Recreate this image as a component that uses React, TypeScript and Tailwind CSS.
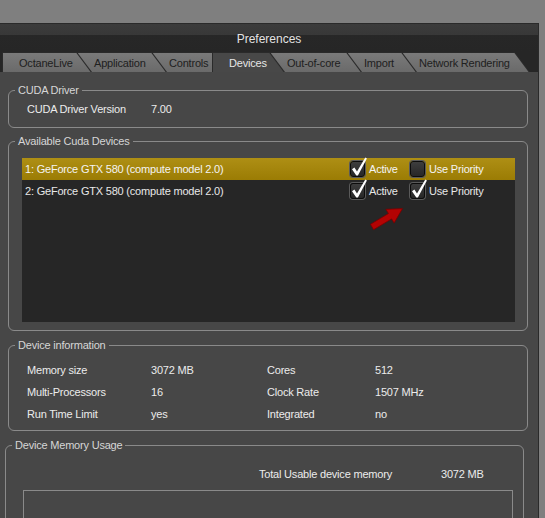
import React from "react";

type TabDef = { label: string; cls: string; active?: boolean };

const tabs: TabDef[] = [
  { label: "OctaneLive", cls: "w-[90px] z-[7]" },
  { label: "Application", cls: "w-[90px] ml-[-15px] z-[6]" },
  { label: "Controls", cls: "w-[76px] ml-[-15px] z-[5]" },
  { label: "Devices", cls: "w-[73px] ml-[-16px] z-[9]", active: true },
  { label: "Out-of-core", cls: "w-[92px] ml-[-15px] z-[4]" },
  { label: "Import", cls: "w-[70px] ml-[-15px] z-[3]" },
  { label: "Network Rendering", cls: "w-[128px] ml-[-15px] z-[2]" },
];

function Tab({ label, cls, active }: TabDef) {
  return (
    <div className={`relative h-[20px] shrink-0 ${cls}`}>
      <div className="absolute inset-0 bg-[#2a2a2a] [clip-path:polygon(0_0,calc(100%_-_15px)_0,100%_100%,0_100%)]" />
      <div
        className={`absolute inset-0 [clip-path:polygon(1px_1px,calc(100%_-_15.6px)_1px,calc(100%_-_1.4px)_100%,1px_100%)] ${
          active ? "bg-[#484848]" : "bg-linear-to-b from-[#7b7b7b] to-[#6a6a6a]"
        }`}
      />
      <span
        className={`relative block pl-[17px] pt-[3px] leading-[17px] whitespace-nowrap ${
          active ? "text-[#e6e6e6]" : "text-[#202020]"
        }`}
      >
        {label}
      </span>
    </div>
  );
}

function Check({ checked }: { checked?: boolean }) {
  return (
    <span className="relative inline-block w-[15px] h-[16px] shrink-0 rounded-[3px] border border-[#0c0c0c] bg-linear-to-b from-[#3e3e3e] to-[#272727] shadow-[0_0_0_1px_#5a5a5a]">
      {checked && (
        <svg className="absolute left-[-2px] top-[-6px]" width="19" height="21" viewBox="0 0 19 21">
          <polygon
            points="3,13.2 5.4,11.6 8,15.6 16.3,1.4 17.9,2.4 8.9,19.5 7.3,19.5"
            fill="#ffffff"
          />
        </svg>
      )}
    </span>
  );
}

function Group({
  title,
  className,
  children,
}: {
  title: string;
  className: string;
  children: React.ReactNode;
}) {
  return (
    <fieldset className={`border border-[#8a8a8a] rounded-[6px] ${className}`}>
      <legend className="ml-[6px] px-[3px] leading-[14px] text-[#d6d6d6]">{title}</legend>
      {children}
    </fieldset>
  );
}

function DeviceRow({ name, selected, priority }: { name: string; selected?: boolean; priority?: boolean }) {
  return (
    <div
      className={`flex items-center h-[22px] ${
        selected ? "bg-linear-to-b from-[#ae8f14] to-[#9b7c04] text-[#f4f4f4]" : "text-[#e8e8e8]"
      }`}
    >
      <span className="w-[328px] pl-[3px] pt-[1px] whitespace-nowrap">{name}</span>
      <span className="flex items-center w-[60px]">
        <Check checked />
        <span className="ml-[4px] pt-[1px]">Active</span>
      </span>
      <span className="flex items-center">
        <Check checked={priority} />
        <span className="ml-[4px] pt-[1px]">Use Priority</span>
      </span>
    </div>
  );
}

const info = [
  ["Memory size", "3072 MB", "Cores", "512"],
  ["Multi-Processors", "16", "Clock Rate", "1507 MHz"],
  ["Run Time Limit", "yes", "Integrated", "no"],
];

export default function App() {
  return (
    <div className="w-[545px] h-[518px] overflow-hidden bg-[#7f7f7f] pt-[23px] font-['Liberation_Sans',Arial,sans-serif] text-[11px] tracking-[-0.2px] text-[#ececec]">
      <div className="w-[539px] h-[495px] border-t border-r border-[#2a2a2a] bg-[#474747] flex flex-col">
        {/* title bar */}
        <div className="h-[28px] shrink-0 flex justify-center pt-[8px] bg-[linear-gradient(to_bottom,#3b3b3b_0px,#383838_11px,#272727_11px,#262626_28px)]">
          <span className="text-[12px] leading-[14px] text-[#e2e2e2] tracking-normal">Preferences</span>
        </div>
        {/* tabs */}
        <div className="h-[20px] shrink-0 flex pl-[2px] bg-[#262626]">
          {tabs.map((t) => (
            <Tab key={t.label} {...t} />
          ))}
        </div>

        <div className="flex flex-col pt-[11px]">
          <Group title="CUDA Driver" className="ml-[8px] w-[520px]">
            <div className="flex pl-[18px] pt-[5px] pb-[11px] leading-[14px]">
              <span className="w-[124px]">CUDA Driver Version</span>
              <span>7.00</span>
            </div>
          </Group>

          <Group title="Available Cuda Devices" className="ml-[8px] w-[520px] mt-[6px]">
            <div className="pl-[13px] pr-[12px] pt-[10px] pb-[8px]">
              <div className="relative h-[164px] bg-[#262626]">
                <DeviceRow name="1: GeForce GTX 580 (compute model 2.0)" selected />
                <DeviceRow name="2: GeForce GTX 580 (compute model 2.0)" priority />
                <svg className="absolute left-[348px] top-[47px]" width="34" height="27" viewBox="0 0 34 27">
                  <polygon
                    points="0.4,19.3 18.4,8.5 15.9,4.3 32.5,3.6 24.1,18.1 21.6,13.9 3.6,24.7"
                    fill="#b30303"
                    stroke="#760000"
                    strokeWidth="0.8"
                    strokeLinejoin="round"
                  />
                </svg>
              </div>
            </div>
          </Group>

          <Group title="Device information" className="ml-[8px] w-[520px] mt-[7px]">
            <div className="grid grid-cols-[124px_116px_108px_1fr] pl-[18px] pt-[7px] pb-[5px] leading-[22px]">
              {info.map((r) =>
                r.map((c, i) => <span key={r[0] + i}>{c}</span>)
              )}
            </div>
          </Group>

          <Group title="Device Memory Usage" className="ml-[5px] w-[519px] mt-[7px] h-[120px]">
            <div className="flex pt-[15px] leading-[14px]">
              <span className="ml-[253px] w-[182px]">Total Usable device memory</span>
              <span>3072 MB</span>
            </div>
            <div className="ml-[17px] mt-[9px] w-[490px] h-[60px] border border-[#8a8a8a]" />
          </Group>
        </div>
      </div>
    </div>
  );
}
